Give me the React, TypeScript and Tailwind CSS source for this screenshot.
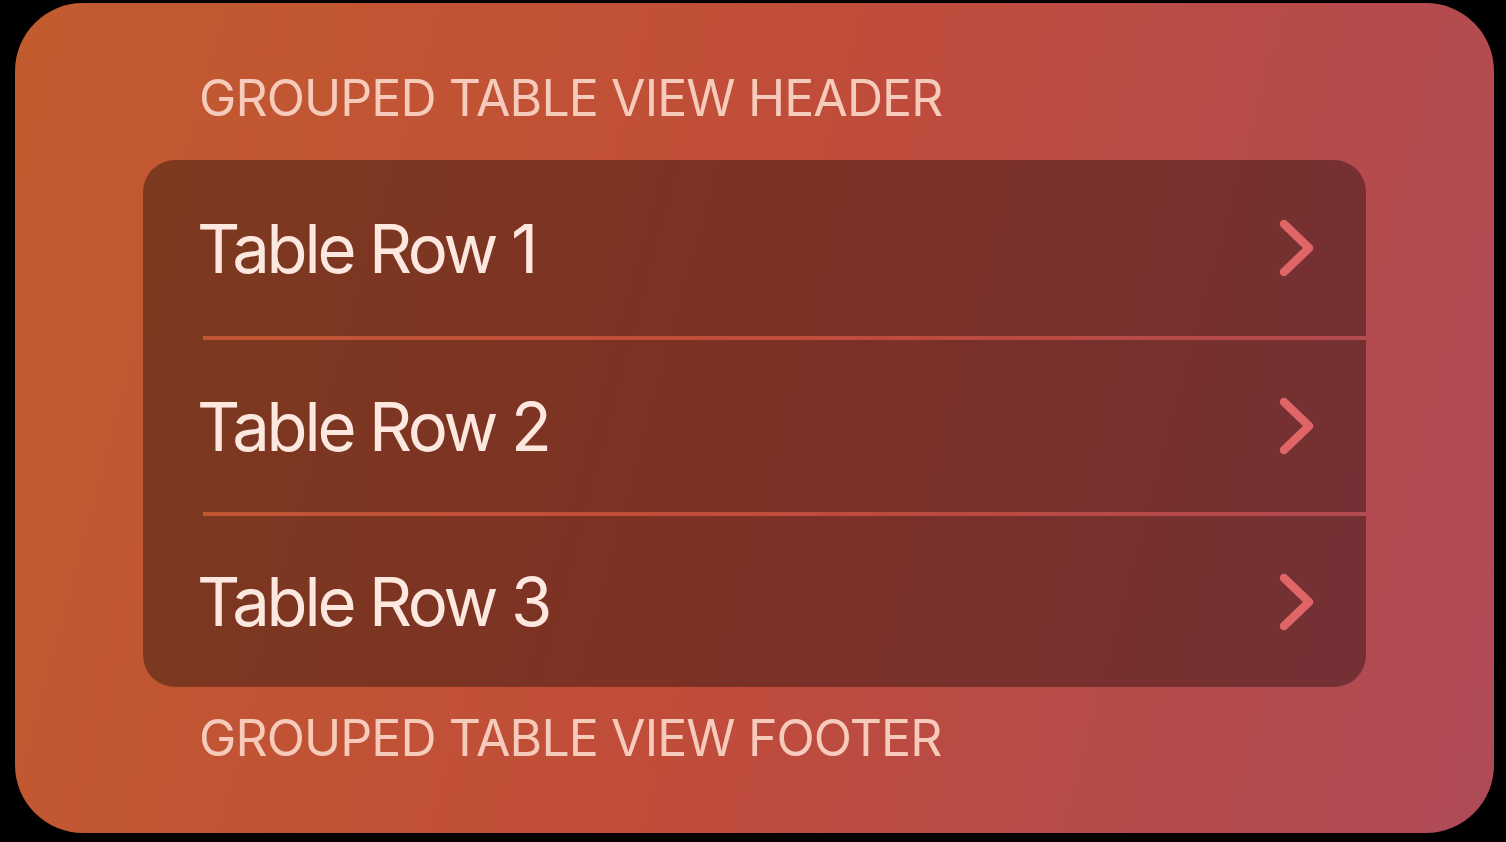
import React from "react";

const rows = [
  { label: "Table Row 1", h: "h-[176px]" },
  { label: "Table Row 2", h: "h-[172px]" },
  { label: "Table Row 3", h: "h-[171px]" },
];

const Chevron = () => (
  <svg width="48" height="64" viewBox="0 0 48 64" className="mr-[44px]">
    <path
      d="M10 8 L35 32 L10 56"
      fill="none"
      stroke="#e06566"
      strokeWidth="8.5"
      strokeLinecap="round"
      strokeLinejoin="round"
    />
  </svg>
);

const Separator = () => (
  <div className="flex h-[4px]">
    <div className="w-[60px] bg-black/35" />
    <div className="flex-1" />
  </div>
);

export default function App() {
  return (
    <div className="h-[842px] w-full bg-black pt-[3px] pl-[15px] pr-[12px]" style={{ fontFamily: "Inter, 'Noto Sans', sans-serif" }}>
      <div className="flex h-[830px] flex-col rounded-[68px] bg-linear-[105deg] from-[#c25c2e] via-[#c04c3a] to-[#ae4a58] px-[128px]">
        <div className="pt-[69px] pb-[36px] pl-[56px] text-[50px] leading-[52px] tracking-[-0.9px] text-[#f7cbbb]">
          GROUPED TABLE VIEW HEADER
        </div>
        <div className="flex flex-col overflow-hidden rounded-[32px]">
          {rows.map((r, i) => (
            <React.Fragment key={r.label}>
              {i > 0 && <Separator />}
              <div className={`flex ${r.h} items-center justify-between bg-black/35 pl-[54px]`}>
                <span className="text-[67px] leading-none tracking-[-3.2px] text-[#fde8e0]">{r.label}</span>
                <Chevron />
              </div>
            </React.Fragment>
          ))}
        </div>
        <div className="pt-[25px] pl-[56px] text-[50px] leading-[52px] tracking-[-0.9px] text-[#f7cbbb]">
          GROUPED TABLE VIEW FOOTER
        </div>
      </div>
    </div>
  );
}
